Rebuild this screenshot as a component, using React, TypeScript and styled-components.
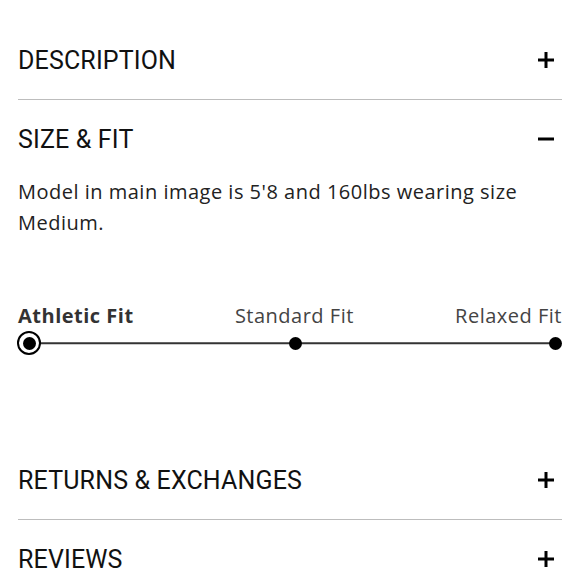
import React, { useState } from "react";
import styled, { createGlobalStyle } from "styled-components";

const GlobalStyle = createGlobalStyle`
  body {
    margin: 0;
    background: #fff;
  }
`;

const fits = ["Athletic Fit", "Standard Fit", "Relaxed Fit"];

function ToggleIcon({ open }: { open: boolean }) {
  return (
    <svg width="18" height="18" viewBox="0 0 18 18">
      <line x1="1" y1="9" x2="17" y2="9" stroke="#000" strokeWidth="3" />
      {!open && <line x1="9" y1="1" x2="9" y2="17" stroke="#000" strokeWidth="3" />}
    </svg>
  );
}

function FitScale({ selected }: { selected: number }) {
  return (
    <FitBlock>
      <FitLabels>
        {fits.map((fit, i) => (
          <FitLabel key={fit} active={i === selected}>
            {fit}
          </FitLabel>
        ))}
      </FitLabels>
      <Track>
        {fits.map((fit, i) =>
          i === selected ? (
            <ActiveDot key={fit}>
              <InnerDot />
            </ActiveDot>
          ) : (
            <Dot key={fit} />
          )
        )}
      </Track>
    </FitBlock>
  );
}

function App() {
  const [open, setOpen] = useState<string>("SIZE & FIT");
  const sections = ["DESCRIPTION", "SIZE & FIT", "RETURNS & EXCHANGES", "REVIEWS"];

  return (
    <>
      <GlobalStyle />
      <Page>
        {sections.map((title) => (
          <Item key={title} open={open === title}>
            <Header onClick={() => setOpen(open === title ? "" : title)}>
              <Title>{title}</Title>
              <ToggleIcon open={open === title} />
            </Header>
            {open === title && title === "SIZE & FIT" && (
              <Content>
                <Body>Model in main image is 5'8 and 160lbs wearing size Medium.</Body>
                <FitScale selected={0} />
              </Content>
            )}
          </Item>
        ))}
      </Page>
    </>
  );
}

const Page = styled.div`
  padding: 21px 18px 0;
`;

const Item = styled.div<{ open: boolean }>`
  border-bottom: 1px solid ${(p) => (p.open ? "transparent" : "#bdbdbd")};
`;

const Header = styled.div`
  height: 78px;
  display: flex;
  align-items: center;
  justify-content: space-between;
  cursor: pointer;
  padding-right: 7px;
`;

const Title = styled.span`
  font-family: Roboto, "Liberation Sans", sans-serif;
  font-size: 25px;
  letter-spacing: 0.15px;
  color: #111;
`;

const Content = styled.div`
  padding: 0 0 85px;
`;

const Body = styled.p`
  margin: -2px 0 0;
  font-family: "Open Sans", "DejaVu Sans", sans-serif;
  font-size: 20px;
  letter-spacing: 0.5px;
  line-height: 31px;
  color: #222;
`;

const FitBlock = styled.div`
  margin-top: 64px;
`;

const FitLabels = styled.div`
  display: flex;
  justify-content: space-between;
`;

const FitLabel = styled.span<{ active: boolean }>`
  font-family: "Open Sans", "DejaVu Sans", sans-serif;
  font-size: 20px;
  letter-spacing: 0.5px;
  font-weight: ${(p) => (p.active ? 700 : 400)};
  color: ${(p) => (p.active ? "#333" : "#444")};
`;

const Track = styled.div`
  position: relative;
  display: flex;
  align-items: center;
  justify-content: space-between;
  margin-top: 2px;
  margin-left: -1px;

  &::before {
    content: "";
    position: absolute;
    left: 12px;
    right: 6px;
    top: 50%;
    height: 1.5px;
    transform: translateY(-50%);
    background: #333;
  }
`;

const ActiveDot = styled.div`
  position: relative;
  width: 20px;
  height: 20px;
  border: 2px solid #000;
  border-radius: 50%;
  background: #fff;
  display: flex;
  align-items: center;
  justify-content: center;
`;

const InnerDot = styled.div`
  width: 13px;
  height: 13px;
  border-radius: 50%;
  background: #000;
`;

const Dot = styled.div`
  position: relative;
  width: 13px;
  height: 13px;
  border-radius: 50%;
  background: #000;
`;

export default App;
